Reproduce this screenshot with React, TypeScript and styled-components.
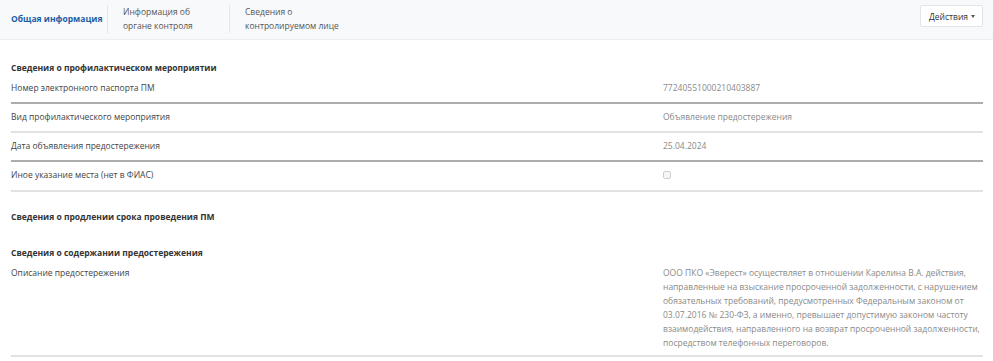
import React from 'react'
import styled, { createGlobalStyle } from 'styled-components'

const GlobalStyle = createGlobalStyle`
  html, body { margin: 0; padding: 0; background: #fff; }
  body { font-family: "Open Sans", "Noto Sans", sans-serif; color: #333; }
`;

type Row = { label: string; value?: string; checkbox?: boolean };

const mainRows: Row[] = [
  { label: 'Номер электронного паспорта ПМ', value: '77240551000210403887' },
  { label: 'Вид профилактического мероприятия', value: 'Объявление предостережения' },
  { label: 'Дата объявления предостережения', value: '25.04.2024' },
  { label: 'Иное указание места (нет в ФИАС)', checkbox: true },
];

const description =
  'ООО ПКО «Эверест» осуществляет в отношении Карелина В.А. действия, направленные на взыскание просроченной задолженности, с нарушением обязательных требований, предусмотренных Федеральным законом от 03.07.2016 № 230-ФЗ, а именно, превышает допустимую законом частоту взаимодействия, направленного на возврат просроченной задолженности, посредством телефонных переговоров.';

function App() {
  return (
    <>
      <GlobalStyle />
      <Page>
        <Header>
          <Tabs>
            <Tab active width={97} first>Общая информация</Tab>
            <Tab width={122}>Информация об<br />органе контроля</Tab>
            <Tab width={120} last>Сведения о<br />контролируемом лице</Tab>
          </Tabs>
          <ActionButton>
            Действия <Caret />
          </ActionButton>
        </Header>

        <Body>
          <SectionTitle>Сведения о профилактическом мероприятии</SectionTitle>
          {mainRows.map((r, i) => (
            <FieldRow key={r.label} strong={i % 2 === 0}>
              <Label>{r.label}</Label>
              <Value>{r.checkbox ? <Check /> : r.value}</Value>
            </FieldRow>
          ))}

          <SectionTitle gap={18}>Сведения о продлении срока проведения ПМ</SectionTitle>

          <SectionTitle gap={22}>Сведения о содержании предостережения</SectionTitle>
          <FieldRow last>
            <Label>Описание предостережения</Label>
            <Value>{description}</Value>
          </FieldRow>
        </Body>
      </Page>
    </>
  )
}

export default App

const Page = styled.div`
  width: 993px;
  min-height: 361px;
  font-size: 8.5px;
`;

const Header = styled.div`
  height: 39px;
  display: flex;
  align-items: flex-start;
  justify-content: space-between;
  background: #f8f9fb;
  border-bottom: 1px solid #eceef1;
  padding: 0 10px 0 11px;
`;

const Tabs = styled.div`
  display: flex;
  align-items: stretch;
  height: 39px;
  padding: 5px 0 6px;
  box-sizing: border-box;
`;

const Tab = styled.div<{ active?: boolean; width: number; first?: boolean; last?: boolean }>`
  width: ${p => p.width}px;
  box-sizing: border-box;
  display: flex;
  align-items: center;
  padding-left: ${p => (p.first ? '0' : '15px')};
  border-right: ${p => (p.last ? 'none' : '1px solid #e4e6ea')};
  line-height: 14px;
  color: ${p => (p.active ? '#1a5ea8' : '#555')};
  font-weight: ${p => (p.active ? 700 : 400)};
`;

const ActionButton = styled.div`
  margin-top: 5px;
  height: 20px;
  padding: 0 7px 0 8px;
  display: flex;
  align-items: center;
  gap: 3px;
  background: #fff;
  border: 1px solid #e2e4e8;
  border-radius: 2px;
  color: #333;
`;

const Caret = styled.span`
  display: inline-block;
  border-left: 2.5px solid transparent;
  border-right: 2.5px solid transparent;
  border-top: 3px solid #555;
  margin-top: 1px;
`;

const Body = styled.div`
  padding: 21px 10px 0 11px;
`;

const SectionTitle = styled.div<{ gap?: number }>`
  font-weight: 700;
  color: #333;
  line-height: 14px;
  margin-top: ${p => p.gap ?? 0}px;
`;

const FieldRow = styled.div<{ strong?: boolean; last?: boolean }>`
  display: grid;
  grid-template-columns: 652px 1fr;
  line-height: 14px;
  padding: 6px 0 ${p => (p.last ? '5px' : '7px')};
  border-bottom: 2px solid ${p => (p.strong ? '#adadad' : '#e2e2e2')};
`;

const Label = styled.div`
  color: #444;
`;

const Value = styled.div`
  color: #8a8a8a;
`;

const Check = styled.span`
  display: inline-block;
  width: 6px;
  height: 6px;
  margin-top: 3px;
  border: 1px solid #cfcfcf;
  border-radius: 2px;
  background: #f7f7f7;
`;
